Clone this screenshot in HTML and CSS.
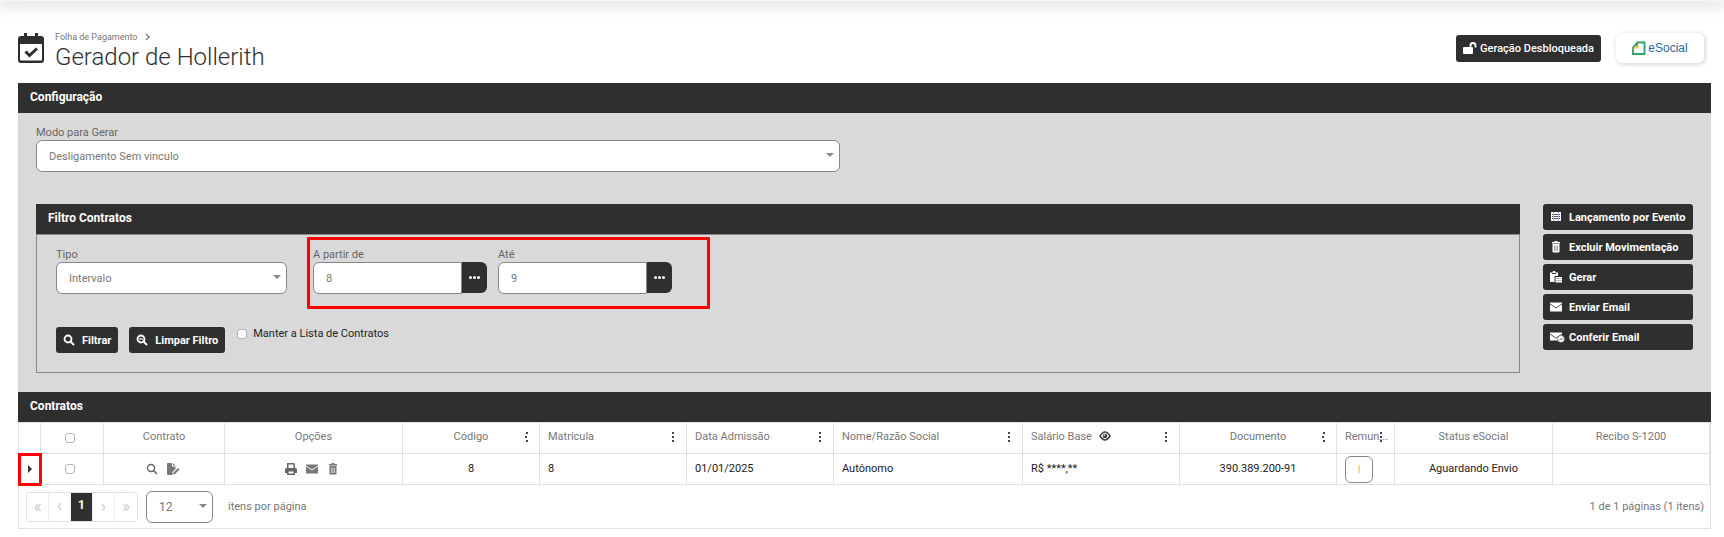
FILE: index.html
```
<!DOCTYPE html>
<html lang="pt-BR">
<head>
    <meta charset="UTF-8">
    <meta name="viewport" content="width=device-width, initial-scale=1.0">
    <title>Gerador de Hollerith</title>
    <link rel="stylesheet" href="styles.css">
</head>
<body>
    <div class="topbar"></div>

    <header class="page-header">
        <svg class="page-icon" viewBox="0 0 26 30">
            <path fill="#2f2f2f" fill-rule="evenodd" d="M6 0h3v3h8V0h3v3h3a3 3 0 0 1 3 3v21a3 3 0 0 1-3 3H3a3 3 0 0 1-3-3V6a3 3 0 0 1 3-3h3zM2 11v15.500a1 1 0 0 0 1 1h20a1 1 0 0 0 1-1V11z"/>
            <path fill="none" stroke="#2f2f2f" stroke-width="3" d="M7.500 18.500l4 4 7.500-7"/>
        </svg>
        <div class="page-title">
            <nav class="breadcrumb">
                <a href="#">Folha de Pagamento</a>
                <svg width="5" height="8" viewBox="0 0 5 8"><path fill="none" stroke="#777" stroke-width="1.300" d="M1 1l3 3-3 3"/></svg>
            </nav>
            <h1>Gerador de Hollerith</h1>
        </div>
        <button class="btn-unlock" type="button">
            <svg width="14" height="12" viewBox="0 0 14 12"><rect x="0" y="5" width="10" height="7" rx="1" fill="#fff"/><path fill="none" stroke="#fff" stroke-width="1.800" d="M7.500 6V3.500a2.500 2.500 0 0 1 5 0V5.500"/></svg>
            Geração Desbloqueada
        </button>
        <button class="btn-esocial" type="button">
            <svg width="14" height="15" viewBox="0 0 14 15">
                <path fill="#fff" stroke="#2fa36b" stroke-width="1.800" d="M5.500 1.500H12.500V13H1V6.500z"/>
                <path fill="#f6c445" d="M1 7.500L6.500 1.500V7.500z"/>
                <path fill="#2c9ec4" d="M2 5.500L6 1v3.500z"/>
            </svg>
            <span>eSocial</span>
        </button>
    </header>

    <main class="content">
        <h2 class="bar">Configuração</h2>
        <section class="config">
            <div class="field field-mode">
                <label for="modo">Modo para Gerar</label>
                <div class="select">
                    <select id="modo"><option>Desligamento Sem vinculo</option></select>
                </div>
            </div>

            <div class="config-row">
                <div class="filter">
                    <h2 class="bar">Filtro Contratos</h2>
                    <div class="filter-body">
                        <div class="filter-fields">
                            <div class="field field-type">
                                <label for="tipo">Tipo</label>
                                <div class="select">
                                    <select id="tipo"><option>Intervalo</option></select>
                                </div>
                            </div>
                            <div class="range">
                                <div class="field">
                                    <label for="de">A partir de</label>
                                    <div class="lookup">
                                        <input id="de" type="text" value="8">
                                        <button type="button" aria-label="Buscar"><svg width="11" height="3" viewBox="0 0 11 3"><g fill="#fff"><circle cx="1.500" cy="1.500" r="1.500"/><circle cx="5.500" cy="1.500" r="1.500"/><circle cx="9.500" cy="1.500" r="1.500"/></g></svg></button>
                                    </div>
                                </div>
                                <div class="field">
                                    <label for="ate">Até</label>
                                    <div class="lookup">
                                        <input id="ate" type="text" value="9">
                                        <button type="button" aria-label="Buscar"><svg width="11" height="3" viewBox="0 0 11 3"><g fill="#fff"><circle cx="1.500" cy="1.500" r="1.500"/><circle cx="5.500" cy="1.500" r="1.500"/><circle cx="9.500" cy="1.500" r="1.500"/></g></svg></button>
                                    </div>
                                </div>
                                <span class="range-mark"></span>
                            </div>
                        </div>
                        <div class="filter-actions">
                            <button class="btn" type="button">
                                <svg viewBox="0 0 12 12"><circle cx="5" cy="5" r="3.500" fill="none" stroke="#fff" stroke-width="1.800"/><path stroke="#fff" stroke-width="2" d="M7.500 7.500L11 11"/></svg>
                                Filtrar
                            </button>
                            <button class="btn" type="button">
                                <svg viewBox="0 0 12 12"><circle cx="5" cy="5" r="3.500" fill="none" stroke="#fff" stroke-width="1.800"/><path stroke="#fff" stroke-width="2" d="M7.500 7.500L11 11"/><path stroke="#fff" stroke-width="1.200" d="M3 5h4"/></svg>
                                Limpar Filtro
                            </button>
                            <label class="keep"><input type="checkbox"> Manter a Lista de Contratos</label>
                        </div>
                    </div>
                </div>

                <div class="side">
                    <button class="btn" type="button">
                        <svg viewBox="0 0 12 12"><path fill="#fff" d="M1 1h10v9H1z"/><path stroke="#2f2f2f" stroke-width=".8" d="M2 3.500h8M2 5.500h8M2 7.500h8"/><path stroke="#aab4ee" d="M3.500 1v9M8.500 1v9"/></svg>
                        Lançamento por Evento
                    </button>
                    <button class="btn" type="button">
                        <svg viewBox="0 0 12 12"><path fill="#fff" d="M4.500 0h3v1H10v1.500H2V1h2.500zM2.500 3h7v7.500a1 1 0 0 1-1 1h-5a1 1 0 0 1-1-1z"/><path stroke="#888" stroke-width=".800" d="M4.500 4.500v5.500M6 4.500v5.500M7.500 4.500v5.500"/></svg>
                        Excluir Movimentação
                    </button>
                    <button class="btn" type="button">
                        <svg viewBox="0 0 12 12"><path fill="#fff" d="M0 1.500h2.500L3 0h2l.5 1.500H8V5H4.500v6H0z"/><path stroke="#2f2f2f" d="M2 2.500h4"/><path fill="#fff" d="M5.500 6H12v5.500H5.500z"/><path stroke="#555" stroke-width=".800" stroke-dasharray="1 1" d="M6.500 7.500h5M6.500 9.500h5"/></svg>
                        Gerar
                    </button>
                    <button class="btn" type="button">
                        <svg viewBox="0 0 12 12"><path fill="#fff" d="M0 1.500h12v9H0z"/><path fill="none" stroke="#555" d="M0 3l6 4 6-4"/></svg>
                        Enviar Email
                    </button>
                    <button class="btn" type="button">
                        <svg viewBox="0 0 12 12"><path fill="#fff" d="M0 1.500h12v8H0z"/><path fill="none" stroke="#555" d="M0 3l6 4 6-4"/><circle cx="11" cy="8" r="3.500" fill="#fff" stroke="#2f2f2f" stroke-width=".500"/><path fill="none" stroke="#555" d="M9.500 8l1 1 2-2"/></svg>
                        Conferir Email
                    </button>
                </div>
            </div>
        </section>

        <h2 class="bar">Contratos</h2>
        <section class="grid">
            <table>
                <colgroup>
                    <col class="w-expand"><col class="w-check"><col class="w-contract"><col class="w-options"><col class="w-code">
                    <col class="w-date"><col class="w-date"><col class="w-name"><col class="w-wide"><col class="w-wide">
                    <col class="w-small"><col class="w-status"><col class="w-wide">
                </colgroup>
                <thead>
                    <tr>
                        <th></th>
                        <th class="check"><input type="checkbox" aria-label="Selecionar todos"></th>
                        <th class="center">Contrato</th>
                        <th class="center">Opções</th>
                        <th class="center">Código<i class="dots"></i></th>
                        <th>Matricula<i class="dots"></i></th>
                        <th>Data Admissão<i class="dots"></i></th>
                        <th>Nome/Razão Social<i class="dots"></i></th>
                        <th>Salário Base
                            <svg class="eye" width="12" height="10" viewBox="0 0 12 10"><path fill="none" stroke="#444" stroke-width="1.500" d="M1 5q5-8 10 0q-5 8-10 0z"/><circle cx="6" cy="5" r="2.300" fill="#444"/><circle cx="5.300" cy="4.200" r=".8" fill="#fff"/></svg>
                            <i class="dots"></i></th>
                        <th class="center">Documento<i class="dots"></i></th>
                        <th>Remun...<i class="dots"></i></th>
                        <th class="center">Status eSocial</th>
                        <th class="center">Recibo S-1200</th>
                    </tr>
                </thead>
                <tbody>
                    <tr>
                        <td class="expand"><button type="button" aria-label="Expandir"></button></td>
                        <td class="check"><input type="checkbox" aria-label="Selecionar contrato 8"></td>
                        <td>
                            <div class="icons">
                                <svg viewBox="0 0 12 12"><circle cx="5" cy="5" r="3.500" fill="none" stroke="#666" stroke-width="1.400"/><path stroke="#666" stroke-width="1.600" d="M7.500 7.500L11 11"/></svg>
                                <svg viewBox="0 0 12 12"><path fill="#777" d="M0 1a1 1 0 0 1 1-1h4v3.500h3.500V6L5.500 9v3H1a1 1 0 0 1-1-1zM6 0l2.500 2.500H6zM6.500 9.500l4.500-4.500 1.500 1.500L8 11l-2 .500z"/></svg>
                            </div>
                        </td>
                        <td>
                            <div class="icons">
                                <svg viewBox="0 0 12 12"><path fill="#666" fill-rule="evenodd" d="M2 0h7l1 1v4h.5a1.500 1.500 0 0 1 1.500 1.500V10h-2v2H2v-2H0V6.500A1.500 1.500 0 0 1 1.500 5H2zM3.500 1.500V5h5V1.500zM3.500 8.500v2h5v-2z"/></svg>
                                <svg viewBox="0 0 12 12"><path fill="#777" d="M0 1.500h12v9H0z"/><path fill="none" stroke="#fff" d="M0 3l6 4 6-4"/></svg>
                                <svg viewBox="0 0 12 12"><path fill="#777" d="M4.500 0h3v1H10v1.500H2V1h2.500zM2.500 3h7v7.500a1 1 0 0 1-1 1h-5a1 1 0 0 1-1-1z"/><path stroke="#ddd" stroke-width=".800" d="M4.500 4.500v5.500M6 4.500v5.500M7.500 4.500v5.500"/></svg>
                            </div>
                        </td>
                        <td class="center">8</td>
                        <td>8</td>
                        <td>01/01/2025</td>
                        <td>Autônomo</td>
                        <td>R$ ****,**</td>
                        <td class="center">390.389.200-91</td>
                        <td><button class="btn-remun" type="button">|</button></td>
                        <td class="center">Aguardando Envio</td>
                        <td></td>
                    </tr>
                </tbody>
            </table>

            <footer class="pager">
                <div class="pages">
                    <button type="button">«</button>
                    <button type="button">‹</button>
                    <button class="active" type="button">1</button>
                    <button type="button">›</button>
                    <button type="button">»</button>
                </div>
                <div class="select page-size">
                    <select id="pageSize"><option>12</option></select>
                </div>
                <label for="pageSize">itens por página</label>
                <span class="total">1 de 1 páginas (1 itens)</span>
            </footer>
        </section>
    </main>
</body>
</html>
```
FILE: styles.css
```
* {
    box-sizing: border-box;
}

body {
    margin: 0;
    background: #fff;
    color: #212529;
    font-family: Roboto, sans-serif;
    font-size: 11px;
    line-height: 14px;
}

svg {
    flex: none;
    overflow: visible;
}

button, input, select {
    margin: 0;
    font-family: inherit;
    font-size: 11px;
}

button {
    border: none;
    cursor: pointer;
}

.topbar {
    height: 1px;
    background: #f5f5f5;
    box-shadow: 0 0 16px 2px rgba(0, 0, 0, 0.3);
}

.page-header {
    display: flex;
    align-items: center;
    padding: 26px 20px 14px 18px;
}

.page-icon {
    width: 26px;
    height: 30px;
    margin-right: 11px;
}

.page-title {
    flex: 1;
}

.breadcrumb {
    display: flex;
    align-items: center;
    gap: 8px;
    height: 18px;
    padding-top: 2px;
    font-size: 9px;
}

.breadcrumb a {
    color: #777;
    text-decoration: none;
}

h1 {
    margin: 0;
    color: #2f2f2f;
    font-size: 24px;
    font-weight: 300;
    line-height: 24px;
}

.btn-unlock {
    display: flex;
    align-items: center;
    gap: 3px;
    height: 27px;
    margin-right: 15px;
    padding: 0 7px;
    border-radius: 3px;
    background: #2f2f2f;
    color: #fff;
    font-weight: 500;
}

.btn-esocial {
    display: flex;
    align-items: center;
    justify-content: center;
    gap: 2px;
    width: 88px;
    height: 30px;
    border-radius: 6px;
    background: #fff;
    box-shadow: 1px 1px 5px rgba(0, 0, 0, 0.2);
    color: #2a6a9e;
    font-family: "Liberation Sans", Arial, sans-serif;
    font-size: 12px;
}

.content {
    margin: 0 13px 8px 18px;
}

.bar {
    margin: 0;
    padding: 6px 12px 8px;
    background: #2f2f2f;
    color: #fff;
    font-size: 12px;
    font-weight: 700;
    line-height: 16px;
}

.config {
    padding: 13px 18px 19px;
    background: #d9d9d9;
}

.field label {
    display: block;
    color: #666;
}

.field-mode {
    width: 49%;
    max-width: 804px;
    margin-bottom: 32px;
}

.select {
    position: relative;
}

.select::after {
    content: "";
    position: absolute;
    top: 13px;
    right: 6px;
    border: 4px solid transparent;
    border-top-color: #888;
    pointer-events: none;
}

.select select,
.lookup input {
    width: 100%;
    height: 32px;
    padding: 0 12px;
    border: 1px solid #888;
    border-radius: 6px;
    background: #fff;
    color: #777;
    appearance: none;
}

.config-row {
    display: flex;
    align-items: flex-start;
    gap: 23px;
}

.filter {
    flex: 1;
}

.filter-body {
    padding: 13px 19px 19px;
    border: 1px solid #888;
}

.filter-fields {
    display: flex;
    gap: 26px;
    margin-bottom: 33px;
}

.field-type {
    width: 16%;
}

.range {
    position: relative;
    display: flex;
    gap: 11px;
}

/* red frame drawn around the two range inputs */
.range-mark {
    position: absolute;
    inset: -11px -38px -15px -6px;
    border: 3px solid #f00;
    border-radius: 1px;
    pointer-events: none;
}

.lookup {
    display: flex;
    width: 174px;
}

.lookup input {
    flex: 1;
    min-width: 0;
    border-radius: 6px 0 0 6px;
}

.lookup button {
    display: flex;
    align-items: center;
    justify-content: center;
    width: 25px;
    height: 31px;
    padding: 0;
    border-radius: 0 6px 6px 0;
    background: #2f2f2f;
}

.filter-actions {
    display: flex;
    align-items: flex-start;
    gap: 11px;
}

.btn {
    display: flex;
    align-items: center;
    gap: 7px;
    height: 26px;
    padding: 0 7px;
    border-radius: 3px;
    background: #2f2f2f;
    color: #fff;
    font-weight: 700;
    white-space: nowrap;
}

.btn svg {
    width: 12px;
    height: 12px;
}

.keep {
    display: flex;
    align-items: center;
    gap: 6px;
    padding: 0 1px;
}

input[type="checkbox"] {
    width: 10px;
    height: 10px;
    border: 1px solid #adb5bd;
    border-radius: 3px;
    background: #fff;
    vertical-align: middle;
    appearance: none;
}

.side {
    display: flex;
    flex-direction: column;
    gap: 4px;
    width: 150px;
}

.grid {
    border: 1px solid #dee0e6;
    color: #777;
}

table {
    width: 100%;
    border-spacing: 0;
    table-layout: fixed;
}

th, td {
    position: relative;
    height: 31px;
    padding: 0 8px;
    border-right: 1px solid #dee0e6;
    border-bottom: 1px solid #dee0e6;
    text-align: left;
    white-space: nowrap;
}

th {
    padding-bottom: 2px;
    color: #777;
    font-weight: 400;
}

td {
    color: #212121;
}

.center {
    text-align: center;
}

.check {
    padding: 0 4px 0 0;
    text-align: center;
}

.w-expand { width: 22px; }
.w-check { width: 63px; }
.w-contract { width: 121px; }
.w-options { width: 178px; }
.w-code { width: 137px; }
.w-date { width: 147px; }
.w-name { width: 189px; }
.w-wide { width: 157px; }
.w-small { width: 58px; }
.w-status { width: 158px; }

.dots,
.dots::before,
.dots::after {
    position: absolute;
    width: 2px;
    height: 2px;
    background: #444;
}

.dots {
    top: 13px;
    right: 12px;
}

.dots::before,
.dots::after {
    content: "";
    top: -4px;
}

.dots::after {
    top: 4px;
}

.eye {
    margin-left: 4px;
    vertical-align: -1px;
}

.expand {
    padding: 0;
    outline: 3px solid #f00;
    outline-offset: -2px;
}

.expand button {
    display: block;
    width: 4px;
    height: 8px;
    margin: 0 auto;
    padding: 0;
    border: 4px solid transparent;
    border-right: none;
    border-left-color: #333;
    background: none;
}

.icons {
    display: flex;
    justify-content: center;
    gap: 9px;
    padding-right: 4px;
}

.icons svg {
    width: 12px;
    height: 12px;
}

.btn-remun {
    display: block;
    width: 28px;
    height: 27px;
    padding: 0;
    border: 1px solid #888;
    border-radius: 6px;
    background: #fff;
    color: #c98b5b;
    font-size: 9px;
}

.pager {
    display: flex;
    align-items: center;
    height: 43px;
    padding: 0 6px 0 7px;
}

.pages {
    display: flex;
    border: 1px solid #dee0e6;
    border-radius: 3px;
}

.pages button {
    width: 22px;
    height: 28px;
    padding: 0 0 3px;
    border-right: 1px solid #eee;
    background: #fff;
    color: #bbb;
    font-size: 18px;
    font-weight: 300;
}

.pages button:last-child {
    border-right: none;
}

.pages .active {
    background: #2f2f2f;
    color: #fff;
    font-size: 12px;
    font-weight: 700;
}

.page-size {
    width: 67px;
    margin: 0 15px 0 8px;
}

.page-size select {
    font-size: 12px;
}

.total {
    margin-left: auto;
}
```
